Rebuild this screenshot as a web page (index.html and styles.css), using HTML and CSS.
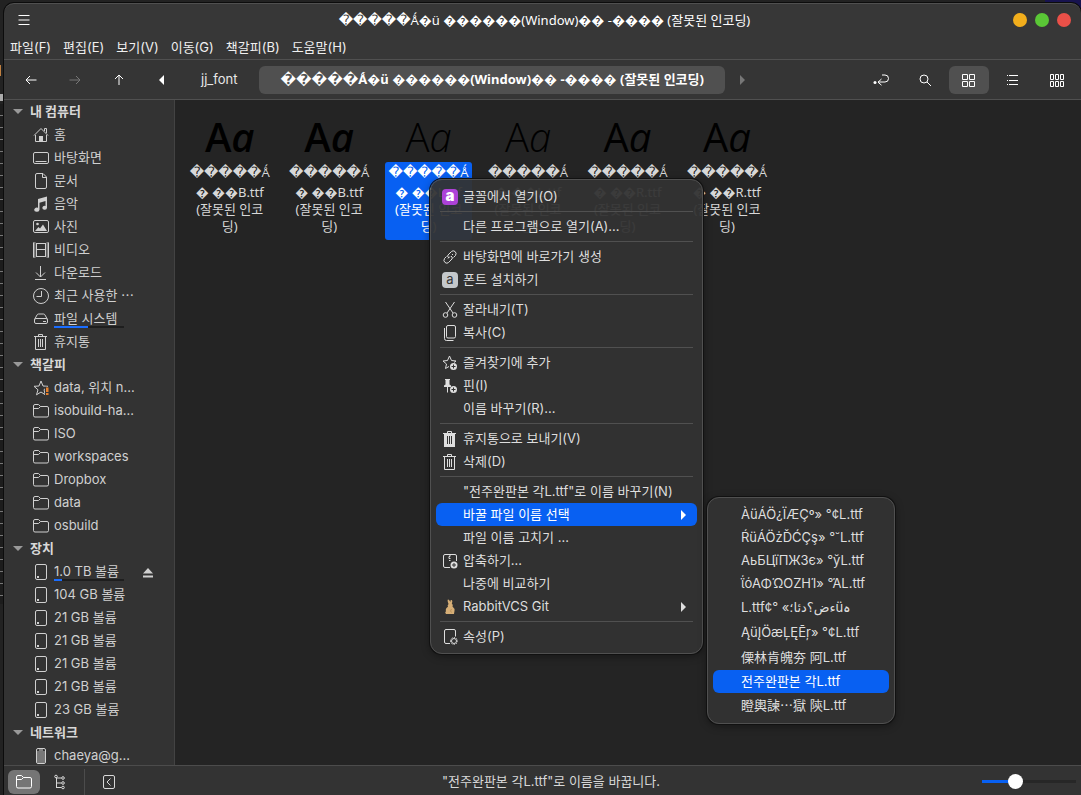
FILE: index.html
```html
<!DOCTYPE html>
<html lang="ko">
<head>
<meta charset="utf-8">
<title>jj_font</title>
<link rel="stylesheet" href="styles.css">
</head>
<body>
<svg class="defs" aria-hidden="true">
  <symbol id="home" viewBox="0 0 16 16"><path d="M1 8.500 8 1.500l7 7M2.500 8v6.500h11V8M11.500 4V1.500h2V6"/><path class="f" d="M6 9h4v5.500H6z"/></symbol>
  <symbol id="desktop" viewBox="0 0 16 16"><rect x=".5" y="2.500" width="15" height="11" rx="1.500"/><path d="M2.500 11.500h11"/></symbol>
  <symbol id="doc" viewBox="0 0 16 16"><path d="M4 .5h6l3.500 3.500v10a1.500 1.500 0 0 1-1.500 1.500H4A1.500 1.500 0 0 1 2.500 14V2A1.500 1.500 0 0 1 4 .5zM9.500 1v3.500H13"/></symbol>
  <symbol id="music" viewBox="0 0 16 16"><path class="f" d="M5 3 14 .5v11.300a2.300 2 0 1 1-1.500-1.900V5L6.500 6.700v7a2.600 2.100 0 1 1-1.500-2z"/></symbol>
  <symbol id="photo" viewBox="0 0 16 16"><rect x=".5" y="1.500" width="15" height="12" rx="1.500"/><path class="f" d="m2 12 3.500-4 1.500 1.500 3-4 4 6.500z"/><circle class="f" cx="4.500" cy="5" r="1.300"/></symbol>
  <symbol id="video" viewBox="0 0 16 16"><path d="M3.500 1v14M12.500 1v14M3.500 1.500h9M3.500 7.500h9M3.500 14.500h9M.5 .5v15M15.500 .5v15"/><path stroke-dasharray="1 1" d="M1.500 .5v15M14.500 .5v15" stroke-width="2"/></symbol>
  <symbol id="download" viewBox="0 0 16 16"><path d="M7.500 1v11M3 7.500 7.500 12 12 7.500M2 14.500h11"/></symbol>
  <symbol id="clock" viewBox="0 0 16 16"><circle cx="8" cy="8" r="7.500"/><path d="M8.500 3v5.500h-5"/></symbol>
  <symbol id="drive" viewBox="0 0 16 16"><path d="M1.500 8.500 4 4Q4.500 3 5.500 3h5q1 0 1.500 1l2.500 4.500"/><rect x="1.500" y="7.500" width="13" height="5" rx="1.500"/><path d="M10 10.500h3"/></symbol>
  <symbol id="trash" viewBox="0 0 16 16"><path d="M1 2.500h13M5.500 2V.5h4V2M2.500 2.500v13h10v-13M5.500 5v8M7.500 5v8M9.500 5v8"/></symbol>
  <symbol id="trashfull" viewBox="0 0 16 16"><path d="M1 2.500h13M5.500 2V.5h4V2"/><path class="f" d="M2 3h11v13H2z"/><path d="M5.500 5v8M7.500 5v8M9.500 5v8" style="stroke:#333"/></symbol>
  <symbol id="star" viewBox="0 0 16 16"><path d="m8 1 2 5 5 .3-4 3.400 1.200 5L8 12l-4.500 2.800 1.500-5-4-3.500L6 6z"/><path style="fill:#333;stroke:none" d="M12 6.800h4V16h-4z"/><path class="o" d="M13 7.500h2.500V12H13zM13 13h2.500v2H13z"/></symbol>
  <symbol id="folder" viewBox="0 0 16 16"><path d="M.5 12.500V3A1.500 1.500 0 0 1 2 1.500h3.500l2 2H14A1.500 1.500 0 0 1 15.500 5v7.500A1.500 1.500 0 0 1 14 14H2a1.500 1.500 0 0 1-1.500-1.500zM.5 5.500h5l2-2"/></symbol>
  <symbol id="disk" viewBox="0 0 16 16"><rect x="2.500" y=".5" width="11" height="15" rx="1.500"/><path class="f" d="M4 12h2v2H4z"/></symbol>
  <symbol id="phone" viewBox="0 0 16 16"><rect x="3.500" y=".5" width="9" height="15" rx="1.500"/><path d="M4 3h8v12H4z" class="g"/><path d="M6 2h4"/></symbol>
  <symbol id="link" viewBox="0 0 16 16"><path d="m7 9-1-1q-.7-1 0-2l3.500-3.500q1.500-1.500 3.500 0t.5 4l-2 2M9 7l1 1q.7 1 0 2l-3.500 3.500q-1.500 1.500-3.500 0t-.5-4l2-2M8 7.500l-2 2M10 6l1-1"/></symbol>
  <symbol id="cut" viewBox="0 0 16 16"><path d="M3.500 0 11 11M12.500 0 5 11"/><circle cx="3.500" cy="13" r="2.300"/><circle cx="12.500" cy="13" r="2.300"/></symbol>
  <symbol id="copy" viewBox="0 0 16 16"><rect x="4.500" y=".5" width="9" height="12.500" rx="1.500"/><path d="M2.500 3v10.500q0 2 2 2h7"/></symbol>
  <symbol id="addstar" viewBox="0 0 16 16"><path d="M7 11.500 3.500 13.500l1-4.500L1 6l4.500-.5L7.500 1l2 4.500L14 6l-2 1.500"/><circle class="f" cx="11.500" cy="11.500" r="3.500"/><path d="M11.500 9.500v4M9.500 11.500h4" style="stroke:#333"/></symbol>
  <symbol id="pin" viewBox="0 0 16 16"><path class="f" d="M3 1h5v1H7.500v4.500L9 7.500V9H2V7.500l1.500-1V2H3z"/><path d="M5.500 9v5.500"/><circle class="f" cx="11.500" cy="11.500" r="3.500"/><path d="M11.500 9.500v4M9.500 11.500h4" style="stroke:#333"/></symbol>
  <symbol id="zip" viewBox="0 0 16 16"><path d="M8 14.500H3A1.500 1.500 0 0 1 1.500 13V3A1.500 1.500 0 0 1 3 1.500h10A1.500 1.500 0 0 1 14.500 3v5M8 1.500v2H7v2h1.500M7 7.500h1.500"/><circle class="f" cx="12" cy="12" r="3.500"/><path d="M12 10v4M10 12h4" style="stroke:#333"/></symbol>
  <symbol id="prop" viewBox="0 0 16 16"><path d="M8 14.500H4A1.500 1.500 0 0 1 2.500 13V2A1.500 1.500 0 0 1 4 .5h8A1.500 1.500 0 0 1 13.500 2v5.500"/><circle cx="12" cy="12" r="2.500"/><path stroke-dasharray="1.200 1.300" d="M8.500 12a3.500 3.500 0 1 0 7 0 3.500 3.500 0 1 0-7 0"/></symbol>
  <symbol id="rabbit" viewBox="0 0 16 16"><path style="fill:#d6ae76;stroke:none" d="M6.500 5Q5 1 6 .5T8.500 3Q8 .5 9.500 1t.3 3.500Q11.500 6 10.500 7.500q2.500 2 2 4.500t-.5 3H4Q2.500 13 4 12.500 3 9.500 6 7.800 5 6.500 6.500 5z"/><path style="stroke:#b8905a" d="M9.500 10q-2 2 0 3.500"/></symbol>
</svg>

<div class="window">
  <header class="titlebar">
    <button class="burger" aria-label="메뉴"><svg viewBox="0 0 12 12"><path d="M.5 1.500h11M.5 6h11M.5 10.500h11"/></svg></button>
    <h1 class="title"><span class="raw">�����</span>Ǻ�ü ������(Window)�� -���� (잘못된 인코딩)</h1>
    <div class="controls"><button class="dot yellow" aria-label="최소화"></button><button class="dot green" aria-label="최대화"></button><button class="dot red" aria-label="닫기"></button></div>
  </header>
  <nav class="menubar">
    <button>파일(F)</button><button>편집(E)</button><button>보기(V)</button><button>이동(G)</button><button>책갈피(B)</button><button>도움말(H)</button>
  </nav>
  <div class="toolbar">
    <button class="tool" aria-label="뒤로"><svg viewBox="0 0 16 16"><path d="M3 8h10.500M7 4 3 8l4 4"/></svg></button>
    <button class="tool dim" aria-label="앞으로"><svg viewBox="0 0 16 16"><path d="M2.500 8H13M9 4l4 4-4 4"/></svg></button>
    <button class="tool" aria-label="위로"><svg viewBox="0 0 16 16"><path d="M8 3v10M4 7l4-4 4 4"/></svg></button>
    <button class="tool prev" aria-label="이전 경로"><svg viewBox="0 0 16 16"><path class="f" d="M11 3v10L6 8z"/></svg></button>
    <button class="crumb">jj_font</button>
    <button class="crumb current"><span class="raw">�����</span>Ǻ�ü ������(Window)�� -���� (잘못된 인코딩)</button>
    <button class="tool next dim" aria-label="다음 경로"><svg viewBox="0 0 16 16"><path class="f" d="M6 3v10l5-5z"/></svg></button>
    <span class="spacer"></span>
    <button class="tool" aria-label="위치 입력"><svg viewBox="0 0 16 16"><circle class="f" cx="2" cy="10.500" r="1.500"/><path d="M9 3h3a3.500 3.500 0 0 1 0 7H5M8.500 7 5 10.200l3.500 3"/></svg></button>
    <button class="tool" aria-label="찾기"><svg viewBox="0 0 16 16"><circle cx="7" cy="7" r="4"/><path d="m10 10 4 4"/></svg></button>
    <button class="tool on" aria-label="아이콘 보기"><svg viewBox="0 0 16 16"><path d="M1.500 2.500h5v5h-5zM8.500 2.500h5v5h-5zM1.500 9.500h5v5h-5zM8.500 9.500h5v5h-5z"/></svg></button>
    <button class="tool" aria-label="목록 보기"><svg viewBox="0 0 16 16"><path d="M2 3.500h1M2 8.500h1M2 12.500h1M4 3.500h9M4 8.500h9M4 12.500h9"/></svg></button>
    <button class="tool" aria-label="간단히 보기"><svg viewBox="0 0 16 16"><path d="M1.500 2.500h3v5h-3zM6.500 2.500h3v5h-3zM11.500 2.500h3v5h-3zM1.500 9.500h3v5h-3zM6.500 9.500h3v5h-3zM11.500 9.500h3v5h-3z"/></svg></button>
  </div>

  <div class="main">
    <aside class="sidebar">
      <h2>내 컴퓨터</h2>
      <a href="#"><svg><use href="#home"/></svg>홈</a>
      <a href="#"><svg><use href="#desktop"/></svg>바탕화면</a>
      <a href="#"><svg><use href="#doc"/></svg>문서</a>
      <a href="#"><svg><use href="#music"/></svg>음악</a>
      <a href="#"><svg><use href="#photo"/></svg>사진</a>
      <a href="#"><svg><use href="#video"/></svg>비디오</a>
      <a href="#"><svg><use href="#download"/></svg>다운로드</a>
      <a href="#"><svg><use href="#clock"/></svg>최근 사용한 ⋯</a>
      <a href="#"><svg><use href="#drive"/></svg>파일 시스템<span class="usage"><i style="width:48%"></i></span></a>
      <a href="#"><svg><use href="#trash"/></svg>휴지통</a>
      <h2>책갈피</h2>
      <a href="#"><svg><use href="#star"/></svg>data, 위치 n...</a>
      <a href="#"><svg><use href="#folder"/></svg>isobuild-ha...</a>
      <a href="#"><svg><use href="#folder"/></svg>ISO</a>
      <a href="#"><svg><use href="#folder"/></svg>workspaces</a>
      <a href="#"><svg><use href="#folder"/></svg>Dropbox</a>
      <a href="#"><svg><use href="#folder"/></svg>data</a>
      <a href="#"><svg><use href="#folder"/></svg>osbuild</a>
      <h2>장치</h2>
      <a href="#"><svg><use href="#disk"/></svg>1.0 TB 볼륨<svg class="eject" viewBox="0 0 12 12"><path class="f" d="M6 1l5 5.500H1zM1 8.500h10v2H1z"/></svg><span class="usage"><i style="width:12%"></i></span></a>
      <a href="#"><svg><use href="#disk"/></svg>104 GB 볼륨</a>
      <a href="#"><svg><use href="#disk"/></svg>21 GB 볼륨</a>
      <a href="#"><svg><use href="#disk"/></svg>21 GB 볼륨</a>
      <a href="#"><svg><use href="#disk"/></svg>21 GB 볼륨</a>
      <a href="#"><svg><use href="#disk"/></svg>21 GB 볼륨</a>
      <a href="#"><svg><use href="#disk"/></svg>23 GB 볼륨</a>
      <h2>네트워크</h2>
      <a href="#"><svg><use href="#phone"/></svg>chaeya@g...</a>
    </aside>
    <main class="files">
      <figure class="file bold"><div class="thumb">A<em>a</em></div><figcaption><div class="first"><span class="raw">�����</span>Ǻ</div>� ��B.ttf<br>(잘못된 인코<br>딩)</figcaption></figure>
      <figure class="file bold"><div class="thumb">A<em>a</em></div><figcaption><div class="first"><span class="raw">�����</span>Ǻ</div>� ��B.ttf<br>(잘못된 인코<br>딩)</figcaption></figure>
      <figure class="file light selected"><div class="thumb">A<em>a</em></div><figcaption><div class="first"><span class="raw">�����</span>Ǻ</div>� ��L.ttf<br>(잘못된 인코<br>딩)</figcaption></figure>
      <figure class="file light"><div class="thumb">A<em>a</em></div><figcaption><div class="first"><span class="raw">�����</span>Ǻ</div>� ��L.ttf<br>(잘못된 인코<br>딩)</figcaption></figure>
      <figure class="file"><div class="thumb">A<em>a</em></div><figcaption><div class="first"><span class="raw">�����</span>Ǻ</div>� ��R.ttf<br>(잘못된 인코<br>딩)</figcaption></figure>
      <figure class="file"><div class="thumb">A<em>a</em></div><figcaption><div class="first"><span class="raw">�����</span>Ǻ</div>� ��R.ttf<br>(잘못된 인코<br>딩)</figcaption></figure>
    </main>
  </div>

  <footer class="statusbar">
    <div class="panes">
      <button class="pane on" aria-label="위치"><svg><use href="#folder"/></svg></button>
      <button class="pane" aria-label="트리"><svg viewBox="0 0 16 16"><path d="M4.500 4v10M4.500 4h5M4.500 9h5M4.500 13.500h5"/><circle cx="4" cy="2.500" r="1.300"/><circle cx="11" cy="4" r="1.300"/><circle cx="11" cy="9" r="1.300"/><circle cx="11" cy="13.500" r="1.300"/></svg></button>
      <span class="rule"></span>
      <button class="pane" aria-label="가장자리 창 숨기기"><svg viewBox="0 0 16 16"><rect x="2.500" y="1.500" width="11" height="13" rx="1.500"/><path d="M9.500 4.500 6 8l3.500 3.500"/></svg></button>
    </div>
    <p class="message">"전주완판본 각L.ttf"로 이름을 바꿉니다.</p>
    <input class="zoom" type="range" min="0" max="100" value="33" aria-label="확대">
  </footer>
</div>

<div class="menu context" role="menu">
  <button role="menuitem"><span class="app purple">a</span>글꼴에서 열기(O)</button>
  <hr>
  <button role="menuitem">다른 프로그램으로 열기(A)...</button>
  <hr>
  <button role="menuitem"><svg><use href="#link"/></svg>바탕화면에 바로가기 생성</button>
  <button role="menuitem"><span class="app gray">a</span>폰트 설치하기</button>
  <hr>
  <button role="menuitem"><svg><use href="#cut"/></svg>잘라내기(T)</button>
  <button role="menuitem"><svg><use href="#copy"/></svg>복사(C)</button>
  <hr>
  <button role="menuitem"><svg><use href="#addstar"/></svg>즐겨찾기에 추가</button>
  <button role="menuitem"><svg><use href="#pin"/></svg>핀(I)</button>
  <button role="menuitem">이름 바꾸기(R)...</button>
  <hr>
  <button role="menuitem"><svg><use href="#trashfull"/></svg>휴지통으로 보내기(V)</button>
  <button role="menuitem"><svg><use href="#trash"/></svg>삭제(D)</button>
  <hr>
  <button role="menuitem">"전주완판본 각L.ttf"로 이름 바꾸기(N)</button>
  <button role="menuitem" class="active more">바꿀 파일 이름 선택</button>
  <button role="menuitem">파일 이름 고치기 ...</button>
  <button role="menuitem"><svg><use href="#zip"/></svg>압축하기...</button>
  <button role="menuitem">나중에 비교하기</button>
  <button role="menuitem" class="more"><svg><use href="#rabbit"/></svg>RabbitVCS Git</button>
  <hr>
  <button role="menuitem"><svg><use href="#prop"/></svg>속성(P)</button>
  <div class="menu sub" role="menu">
    <button role="menuitem">ÀüÁÖ¿ÏÆÇº» °¢L.ttf</button>
    <button role="menuitem">ŔüÁÖżĎĆÇş» °˘L.ttf</button>
    <button role="menuitem">АьБЦїПЖЗє» °ўL.ttf</button>
    <button role="menuitem">ΐόΑΦΏΟΖΗΊ» °ΆL.ttf</button>
    <button role="menuitem" class="tall"><bdi>ہüءض؟دئا؛» °¢L.ttf</bdi></button>
    <button role="menuitem" class="tall">ĄüĮÖæĻĘĒŗ» °¢L.ttf</button>
    <button role="menuitem" class="tall">傈林肯魄夯 阿L.ttf</button>
    <button role="menuitem" class="active">전주완판본 각L.ttf</button>
    <button role="menuitem" class="tall">瞪輿諫⋯獄 陝L.ttf</button>
  </div>
</div>
</body>
</html>
```

FILE: styles.css
```css
* { box-sizing: border-box; }

body {
  margin: 0;
  height: 100vh;
  overflow: hidden;
  position: relative;
  padding: 3px 0 0 4px;
  background:
    linear-gradient(#17134f, #17134f) right top / 36px 12px no-repeat,
    linear-gradient(#c08040, #c08040) 0 65px / 1px 11px no-repeat,
    linear-gradient(#aaa, #aaa) 0 94px / 3px 7px no-repeat,
    repeating-linear-gradient(#1c1c1c 0 11px, #777 11px 12px) 0 104px / 3px 500px no-repeat,
    #222;
  font: 13px/23px Inter, "Noto Sans CJK KR", "DejaVu Sans", sans-serif;
  color: #d8d8d8;
}

.defs { position: absolute; width: 0; height: 0; }

button {
  border: 0;
  padding: 0;
  background: none;
  color: inherit;
  font: inherit;
}

svg {
  width: 16px;
  height: 16px;
  flex: none;
  fill: none;
  stroke: currentColor;
}
.f { fill: currentColor; stroke: none; }
.g { fill: #777; stroke: none; }
.o { fill: #e8812f; stroke: none; }

/* Undecodable bytes at the start of a name */
.raw { font-family: "DejaVu Sans", sans-serif; font-size: 14px; line-height: 1; }

.window {
  height: 100%;
  display: flex;
  flex-direction: column;
  overflow: hidden;
  border-radius: 10px 10px 0 0;
  border-top: 1px solid #505050;
  box-shadow: 0 0 0 1px #0c0c0c;
  background: #373737;
}

.titlebar {
  display: grid;
  grid-template-columns: 1fr auto 1fr;
  align-items: center;
  height: 32px;
  padding: 0 10px 0 14px;
  color: #fff;
}
.burger { justify-self: start; display: flex; }
.burger svg { width: 12px; height: 12px; }
.title {
  margin: 0;
  font: 13px/23px "Noto Sans", "Noto Sans CJK KR", "DejaVu Sans", sans-serif;
}
.controls { justify-self: end; display: flex; gap: 8px; }
.dot { width: 14px; height: 14px; border-radius: 50%; }
.yellow { background: #f2ae1c; }
.green { background: #5ac736; }
.red { background: #ea5048; }

.menubar {
  display: flex;
  gap: 12px;
  height: 23px;
  padding: 0 6px;
  color: #f0f0f0;
}

.toolbar {
  display: flex;
  align-items: center;
  gap: 4px;
  height: 41px;
  padding: 0 4px 0 7px;
  border-top: 1px solid #505050;
  border-bottom: 1px solid #505050;
  background: #353535;
  color: #fff;
}
.tool {
  display: flex;
  align-items: center;
  justify-content: center;
  width: 40px;
  height: 28px;
  border-radius: 6px;
}
.on { background: #505050; }
.dim { color: #777; }
.prev { width: 36px; }
.next { width: 26px; }
.crumb { padding: 0 18px; height: 28px; border-radius: 6px; color: #e8e8e8; }
.current {
  padding: 0 21px;
  background: #505050;
  color: #fff;
  font: bold 13px/23px "Noto Sans", "Noto Sans CJK KR", "DejaVu Sans", sans-serif;
}
.spacer { flex: 1; }

.main { flex: 1; min-height: 0; display: flex; }

.sidebar {
  width: 171px;
  flex: none;
  overflow: hidden;
  border-right: 1px solid #434343;
  background: #333;
}
.sidebar h2 {
  display: flex;
  align-items: center;
  gap: 7px;
  margin: 0;
  padding-left: 9px;
  font-size: 13px;
  line-height: 23px;
  font-weight: bold;
}
.sidebar h2::before {
  content: "";
  border: 5px solid transparent;
  border-top-color: #999;
  border-bottom: 0;
}
.sidebar a {
  position: relative;
  display: flex;
  align-items: center;
  gap: 5px;
  height: 23px;
  padding-left: 29px;
  color: #d0d0d0;
  text-decoration: none;
  white-space: nowrap;
}
.usage {
  position: absolute;
  left: 50px;
  bottom: 2px;
  width: 70px;
  height: 2px;
  background: #1e1e1e;
}
.usage i { display: block; height: 2px; background: #1a6dff; }
.sidebar .eject { width: 12px; height: 12px; margin: 2px 20px 0 auto; }

.files {
  flex: 1;
  display: grid;
  grid-template-columns: repeat(auto-fill, minmax(96px, 1fr));
  align-content: start;
  padding: 13px 6px 0 5px;
  background: #242424;
}
.file { margin: 0; display: flex; flex-direction: column; align-items: center; }
.thumb {
  height: 49px;
  font: 400 40px/48px "Open Sans", "Noto Sans", sans-serif;
  color: #000;
}
.bold .thumb { font-weight: 600; }
.light .thumb { font-weight: 300; }
.file figcaption {
  width: 87px;
  padding: 1px 0 5px;
  border-radius: 3px;
  text-align: center;
  white-space: nowrap;
  font: 13px/17px "Noto Sans", "Noto Sans CJK KR", "DejaVu Sans", sans-serif;
}
.first { height: 18px; line-height: 18px; margin-bottom: 3px; }
.selected figcaption { background: #0860f2; color: #fff; }

.statusbar {
  display: grid;
  grid-template-columns: 1fr auto 1fr;
  align-items: center;
  height: 30px;
  padding: 2px 5px 0 4px;
  border-top: 1px solid #4c4c4c;
  background: #333;
}
.panes { display: flex; align-items: center; gap: 4px; }
.pane {
  display: flex;
  align-items: center;
  justify-content: center;
  width: 32px;
  height: 24px;
  border-radius: 6px;
}
.pane.on { background: #757575; color: #fff; }
.rule { width: 1px; height: 26px; margin: 0 4px; background: #4c4c4c; }
.message { margin: 0 0 0 18px; }
.zoom {
  appearance: none;
  justify-self: end;
  width: 94px;
  height: 16px;
  margin: 0;
  background: linear-gradient(90deg, #0860f2 33%, #272727 33%) center / 100% 3px no-repeat;
}
.zoom::-webkit-slider-thumb {
  appearance: none;
  width: 15px;
  height: 15px;
  border-radius: 50%;
  background: #fff;
}

.menu {
  position: absolute;
  padding: 5px;
  border: 1px solid #505050;
  border-radius: 12px;
  background: rgba(51, 51, 51, .95);
  box-shadow: 0 0 0 1px #111, 0 2px 8px rgba(0, 0, 0, .4);
  color: #dedede;
}
.context { left: 430px; top: 179px; width: 273px; }
.sub { left: 276px; top: 317px; width: 188px; }
.menu button {
  display: flex;
  align-items: center;
  width: 100%;
  height: 23px;
  padding-left: 27px;
  border-radius: 6px;
  white-space: nowrap;
}
.sub button { padding-left: 28px; }
.menu svg, .app { width: 16px; height: 16px; margin: 0 5px 0 -21px; }
.menu hr { margin: 3px 4px; border: 0; height: 1px; background: #505050; }
.menu .tall { height: 25px; }
.menu .active { background: #0860f2; color: #fff; }
.more::after {
  content: "";
  margin: 0 11px 0 auto;
  border: 5px solid transparent;
  border-left-color: currentColor;
  border-right: 0;
}
.app {
  border-radius: 4px;
  text-align: center;
  line-height: 15px;
}
.purple { background: #ad42d8; color: #fff; font-weight: 900; font-size: 15px; line-height: 14px; }
.gray { background: #c4c8cb; color: #333; }
```
